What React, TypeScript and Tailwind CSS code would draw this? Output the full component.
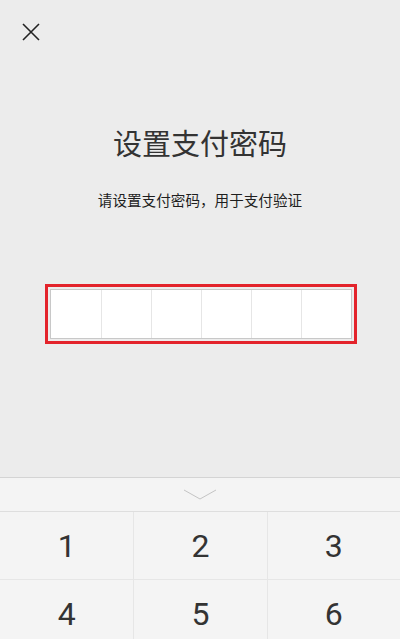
import React from 'react';

const cjk = "font-['Roboto','Noto_Sans_CJK_SC',sans-serif]";

function CloseIcon() {
  return (
    <svg width="18" height="18" viewBox="0 0 18 18" fill="none">
      <path d="M1 1L17 17M17 1L1 17" stroke="#222" strokeWidth="1.6" />
    </svg>
  );
}

function Chevron() {
  return (
    <svg width="34" height="11" viewBox="0 0 34 11" fill="none">
      <path d="M1 1L17 10L33 1" stroke="#c4c4c4" strokeWidth="1" />
    </svg>
  );
}

export default function App() {
  const cells = [0, 1, 2, 3, 4, 5];
  const keys = ['1', '2', '3', '4', '5', '6'];

  return (
    <div className={`w-[413px] h-[639px] bg-white overflow-hidden ${cjk}`}>
      <div className="w-[400px] h-[639px] flex flex-col overflow-hidden">
        {/* Верхняя часть */}
        <div className="h-[477px] shrink-0 bg-[#ececec] flex flex-col">
          <div className="pt-[23px] pl-[22px]">
            <CloseIcon />
          </div>
          <h1 className="mt-[90px] text-center text-[29px] leading-[29px] text-[#333]">
            设置支付密码
          </h1>
          <p className="mt-[34px] text-center text-[14.6px] leading-[14px] text-[#1e1e1e]">
            请设置支付密码，用于支付验证
          </p>
          {/* Поле пароля */}
          <div className="mt-[76px] ml-[45px] w-fit border-[3px] border-[#e3232b] p-[2px]">
            <div className="flex border border-[#c8c8c8] bg-white">
              {cells.map((i) => (
                <div
                  key={i}
                  className={`w-[50px] h-[48px] ${i > 0 ? 'border-l border-[#e6e6e6]' : ''}`}
                />
              ))}
            </div>
          </div>
        </div>

        {/* Клавиатура */}
        <div className="shrink-0 bg-[#f4f4f4] border-t border-[#d4d4d4]">
          <div className="h-[34px] flex items-center justify-center border-b border-[#dedede]">
            <Chevron />
          </div>
          <div className="grid grid-cols-3">
            {keys.map((k, i) => (
              <div
                key={k}
                className={`h-[68px] flex items-center justify-center text-[32px] text-[#333] border-b border-[#e6e6e6] ${
                  i % 3 !== 0 ? 'border-l' : ''
                }`}
              >
                {k}
              </div>
            ))}
          </div>
        </div>
      </div>
    </div>
  );
}
